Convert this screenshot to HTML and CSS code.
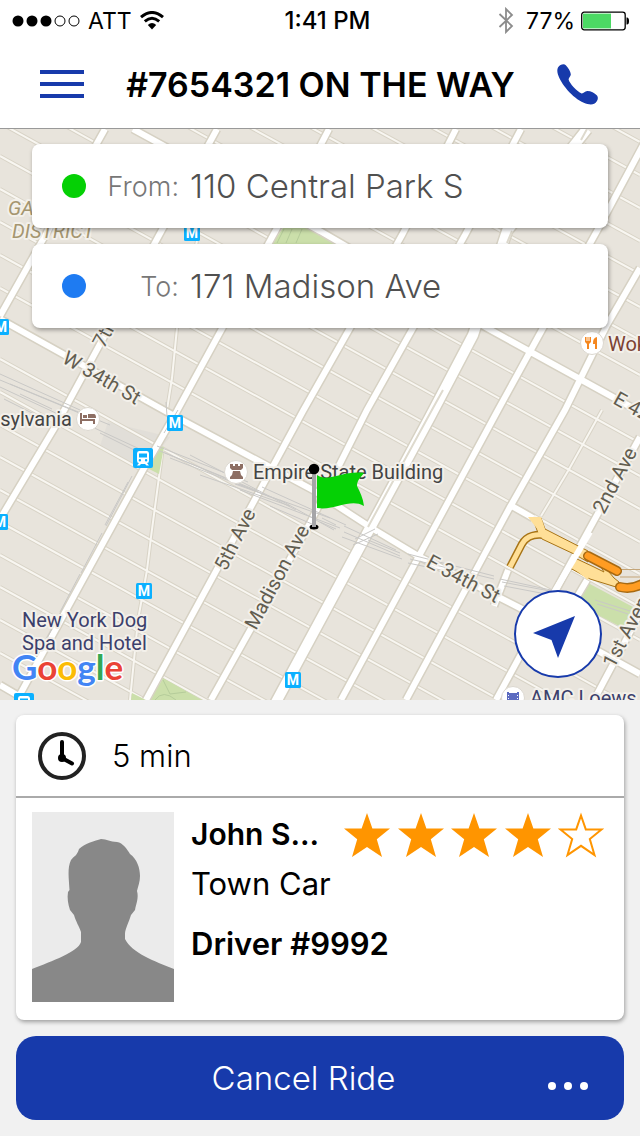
FILE: index.html
```
<!DOCTYPE html>
<html lang="en">
<head>
    <meta charset="UTF-8">
    <meta name="viewport" content="width=device-width, initial-scale=1.0">
    <title>Ride #7654321</title>
    <link rel="stylesheet" href="styles.css">
</head>
<body>
    <div class="status-bar">
        <div class="status-left">
            <svg class="signal" width="68" height="14" viewBox="0 0 68 14" aria-hidden="true">
                <circle cx="6" cy="7" r="5.5"/>
                <circle cx="20" cy="7" r="5.5"/>
                <circle cx="34" cy="7" r="5.5"/>
                <circle class="off" cx="48" cy="7" r="5"/>
                <circle class="off" cx="62" cy="7" r="5"/>
            </svg>
            <span>ATT</span>
            <svg width="24" height="19" viewBox="0 0 24 19" aria-hidden="true">
                <path d="M1 6.2 Q12 -3.2 23 6.2" fill="none" stroke="#000" stroke-width="3"/>
                <path d="M4.8 10.4 Q12 4.2 19.2 10.4" fill="none" stroke="#000" stroke-width="3"/>
                <path d="M7.8 13.9 Q12 10 16.2 13.9 L12 18.6 Z"/>
            </svg>
        </div>
        <div class="status-time">1:41 PM</div>
        <div class="status-right">
            <svg width="16" height="27" viewBox="0 0 16 27" aria-hidden="true">
                <path d="M1.5 7 L14 19 L8 25 V2 L14 8 L1.5 20" fill="none" stroke="#8c8c8c" stroke-width="1.8"/>
            </svg>
            <span>77%</span>
            <svg width="48" height="20" viewBox="0 0 48 20" aria-hidden="true">
                <rect x="0.7" y="1.2" width="43.500" height="17.6" rx="2.5" fill="#fff" stroke="#000" stroke-width="1.3"/>
                <rect x="2" y="2.6" width="28" height="14.8" fill="#4cd964"/>
                <path d="M45.500 6.5 H46 Q48 6.5 48 10 Q48 13.5 46 13.5 H45.500 Z"/>
            </svg>
        </div>
    </div>

    <header class="header">
        <button class="icon-button" aria-label="Menu">
            <svg width="44" height="28" viewBox="0 0 44 28"><path d="M0 0H44V4H0ZM0 12H44V16H0ZM0 24H44V28H0Z"/></svg>
        </button>
        <h1>#7654321 ON THE WAY</h1>
        <a class="icon-button" href="tel:" aria-label="Call driver">
            <svg width="41" height="41" viewBox="0 0 41 41"><path d="M1 3.5 C3 0.5 7 -0.6 8.8 1.2 C11.5 4 13.5 7.5 13.8 10.2 C14 12.4 11.6 13.2 11.6 15.6 C12.5 19.5 20 28 24.6 29.4 C26.8 29.6 27.6 27 30.3 27 C34 27 37.5 29 40 31.6 C42 34 40.2 38.4 37.2 39.8 C34.5 41 30.5 40.4 26.8 38.8 C15.5 34 3.5 19.5 0.8 10 C0.2 7.5 0 5.3 1 3.5 Z"/></svg>
        </a>
    </header>

    <main class="map">
        <svg class="map-canvas" viewBox="0 129 640 571" preserveAspectRatio="xMidYMin slice" role="img" aria-label="Map of Midtown Manhattan">
            <defs>
                <path id="streets" d="M0 -9 L640 340 M0 -42 L640 307 M0 -75 L640 274 M0 -108 L640 241 M0 -141 L640 208 M0 -174 L640 175 M0 -207 L640 142 M0 24 L640 375
                    M0 90 L640 443 M0 123 L640 476 M0 156 L640 509 M0 189 L640 542 M0 222 L640 574 M0 255 L640 607 M0 288 L640 640
                    M0 359 L640 711 M0 392 L640 744 M0 425 L640 777 M0 457 L640 809 M0 490 L640 842 M0 522 L640 874 M0 555 L640 907 M0 587 L640 939 M0 620 L640 972 M0 653 L640 1005 M0 686 L640 1038
                    M130 700 L138 620 L147 570 L151 537 L163 447 M166 416 L172 378 L177 328 L197 241 M602 410 L568 471 L541 516"/>
                <path id="avenues" d="M0 316 L105 129 M0 519 L55 427 L163 228 L217 129 M17 700 L143 470 L177 411 L277 228 L329 129 M146 700 L303 411 L350 328 L402 235 L456 129 M211 700 L310 523 L367 410 L413 328 L465 235 L521 129 M341 700 L498 410 L543 328 L597 231 L650 132 M406 700 L510 507 L565 410 L607 325 L640 268 M496 700 L563 577 L640 437 M594 700 L645 604 M508 570 L494 606 M587 580 L565 617
                    M0 319 L167 412 L313 490 L370 527 L420 557 L520 608 L640 674 M133 129 L320 231 L487 328 L640 412 M0 685 L24 699 M510 505 L533 518"/>
                <path id="park-ave" d="M275 704 L363 541 L430 417 L473 335 L507 231 L587 129"/>
                <symbol id="metro" viewBox="0 0 16 16">
                    <rect width="16" height="16" rx="1.5" fill="#0bb0ff"/>
                    <text class="metro-m" x="8" y="13" text-anchor="middle">M</text>
                </symbol>
                <symbol id="train" viewBox="0 0 20 20">
                    <rect width="20" height="20" rx="2" fill="#0bb0ff"/>
                    <path fill="#fff" fill-rule="evenodd" d="M6 3 H14 Q16 3 16 5.5 V12.5 Q16 15 14 15 L16 17.5 H13.5 L12 16 H8 L6.5 17.5 H4 L6 15 Q4 15 4 12.5 V5.5 Q4 3 6 3 Z M6 5.5 V9.5 H14 V5.5 Z M5.7 12.3 A1.2 1.2 0 1 0 8.1 12.3 A1.2 1.2 0 1 0 5.7 12.3 M11.9 12.3 A1.2 1.2 0 1 0 14.3 12.3 A1.2 1.2 0 1 0 11.9 12.3"/>
                </symbol>
            </defs>

            <rect class="land" x="0" y="129" width="640" height="571"/>
            <path fill="#dedbd5" d="M108 422 L170 437 L143 470 L100 446 Z" opacity="0.7"/>

            <use href="#streets" class="street-edge"/>
            <use href="#streets" class="street"/>

            <!-- parks -->
            <g class="park">
                <path d="M283 228 H315 L342 244 H272 Z"/>
                <path d="M157 446 L164 447 L159 474 L147 468 Z"/>
                <path d="M163 678 L202 700 H150 Z"/>
                <path d="M132 693 L146 700 H131 Z"/>
                <path d="M588 583 L633 607 L623 628 L577 604 Z"/>
            </g>
            <path class="park-path" d="M155 700 Q163 689 176 700 M163 680 L170 694 M186 692 L170 694 M277 243 L284 229 M286 243 L292 229 M296 243 L302 229"/>

            <use href="#avenues" class="avenue-edge"/>
            <use href="#park-ave" class="park-ave-edge"/>
            <use href="#avenues" class="avenue"/>
            <use href="#park-ave" class="park-ave"/>
            <path class="median" d="M368 527 L433 408 L443 390 M507 243 L512 231 M581 140 L587 129"/>

            <!-- rail tracks -->
            <path class="rail" d="M0 374 L80 410 M0 380 L96 420 M0 387 L60 415 M10 384 L110 425 M20 394 L52 409 M4 399 L40 417 M88 425 L146 452 M100 433 L150 458 M157 446 L248 482 M160 451 L258 491 M165 453 L270 497 M170 458 L284 502 M190 455 L296 510 M200 475 L290 506 M235 484 L330 518 M240 490 L340 528 M262 487 L346 525 M280 500 L334 530 M270 506 L312 524 M320 522 L336 529 M322 518 L336 525 M344 526 L396 550 M344 532 L400 556 M342 537 L402 559 M368 540 L400 553 M408 554 L494 576 M410 559 L494 579 M408 563 L460 574 M500 579 L560 592 M502 582 L550 591 M504 586 L546 594 M595 600 L630 611 M597 604 L628 614 M353 545 L378 534 M355 539 L375 529"/>
            <path class="rail" d="M132 476 L106 526 M128 482 L105 525 M102 533 L81 573 M80 574 L60 612 M52 629 L35 660 M164 433 L178 410 M167 416 L166 402"/>

            <!-- tunnel approach -->
            <path class="ramp-edge" d="M510 567 L522 544 C527 535 537 534 544 535 L580 552"/>
            <path class="ramp-fill outlined" d="M533 519 L541 518 L545 529 L588 551 L588 562 L574 554 L542 539 L538 533 Z"/>
            <path class="ramp" d="M510 567 L522 544 C527 535 537 534 544 535 L580 552"/>
            <path class="ramp-fill outlined" d="M577 559 L594 567 L604 572 L599 564 L604 566 L614 578 L619 582 L616 587 L590 579 L570 568 Z"/>
            <path class="ramp-fill" d="M528 517 L541 517 L545 529 L538 530 Z M568 564 L576 560 L590 572 L588 580 Z"/>
            <path class="avenue" d="M553 594 L590 532"/>
            <path class="tunnel-exit" d="M620 569.500 H640 M620 577 H640"/>
            <path class="road-edge" d="M588 556 L617 571 M620 587 Q632 590 644 583"/>
            <path class="road-main" d="M588 556 L617 571 M620 587 Q632 590 644 583"/>

            <g class="street-label">
                <text transform="translate(61 362) rotate(30)">W 34th St</text>
                <text transform="translate(104 349) rotate(-62)">7th Ave</text>
                <text transform="translate(226 572) rotate(-63)">5th Ave</text>
                <text transform="translate(256 631) rotate(-62)">Madison Ave</text>
                <text transform="translate(425 566) rotate(28)">E 34th St</text>
                <text transform="translate(604 515) rotate(-62)">2nd Ave</text>
                <text transform="translate(614 669) rotate(-62)">1st Avenue</text>
                <text transform="translate(612 403) rotate(29)">E 42nd St</text>
            </g>
            <g class="area-label">
                <text x="8" y="215">GARMENT</text>
                <text x="12" y="238">DISTRICT</text>
            </g>
            <g class="place-label">
                <text x="72" y="426" text-anchor="end">sylvania</text>
                <text x="253" y="479">Empire State Building</text>
            </g>
            <g class="place-label venue">
                <text x="22" y="627">New York Dog</text>
                <text x="22" y="650">Spa and Hotel</text>
                <text x="530" y="705">AMC Loews</text>
            </g>
            <text class="place-label food" x="608" y="351">Wok</text>

            <g class="poi">
                <circle cx="88" cy="419" r="11.5"/>
                <circle cx="236" cy="472" r="11.5"/>
                <circle cx="592" cy="343" r="11.5"/>
                <circle cx="513" cy="698" r="11.5"/>
            </g>
            <path fill="#8d6e63" d="M80 413 H82 V419 H95 V424 H93 V421 H82 V424 H80 Z M83 415 H87 V418 H83 Z M88 414 H94 Q96 414 96 418 H88 Z"/>
            <path fill="#8d6e63" d="M230 464 H233 V466 H235 V464 H238 V466 H240 V464 H243 V468 L241 470 H232 L230 468 Z M233 471 H240 L241 475 H232 Z M232 475 H241 L243 477 V479 H230 V477 Z"/>
            <path fill="#f5871f" d="M585 337 H586.5 V341 H587.5 V337 H588.5 V341 H589.5 V337 H591 V342 L589 344 V349 H587 V344 L585 342 Z M597 337 V349 H595 V344 H593 Q592.500 338 597 337 Z"/>
            <path fill="#5c6bc0" fill-rule="evenodd" d="M507 692 H509 V693 H517 V692 H519 V703 H507 Z M508 695 V696 H509 V695 Z M508 698 V699 H509 V698 Z M517 695 V696 H518 V695 Z M517 698 V699 H518 V698 Z"/>

            <use href="#metro" x="184" y="225" width="16" height="16"/>
            <use href="#metro" x="-7" y="319" width="16" height="16"/>
            <use href="#metro" x="167" y="415" width="16" height="16"/>
            <use href="#metro" x="-8" y="514" width="16" height="16"/>
            <use href="#metro" x="136" y="583" width="16" height="16"/>
            <use href="#metro" x="285" y="672" width="16" height="16"/>
            <use href="#train" x="133" y="448" width="20" height="20"/>
            <use href="#train" x="14" y="693" width="20" height="20"/>

            <text class="google" x="12" y="680"><tspan fill="#4285f4">G</tspan><tspan fill="#ea4335">o</tspan><tspan fill="#fbbc05">o</tspan><tspan fill="#4285f4">g</tspan><tspan fill="#34a853">l</tspan><tspan fill="#ea4335">e</tspan></text>

            <!-- pickup flag -->
            <ellipse cx="314" cy="527" rx="4.500" ry="2.500"/>
            <rect x="312" y="470" width="4" height="57" fill="#a5a5a8"/>
            <path fill="#05d005" d="M317 475 C328 483 344 470 364 473 C361 477 357 480 357 486 C360 492 363 498 364 506 C350 498 335 511 317 508 Z"/>
            <circle cx="314" cy="469" r="5.300"/>
        </svg>

        <form class="route">
            <div class="route-row">
                <span class="dot dot-from"></span>
                <label for="from">From:</label>
                <input id="from" type="text" value="110 Central Park S" readonly>
            </div>
            <div class="route-row">
                <span class="dot dot-to"></span>
                <label for="to">To:</label>
                <input id="to" type="text" value="171 Madison Ave" readonly>
            </div>
        </form>

        <button class="locate" aria-label="Center on my location">
            <svg width="42" height="42" viewBox="0 0 42 42"><path d="M42 0 L25 42 L18.500 24 L0 17 Z"/></svg>
        </button>
    </main>

    <section class="ride">
        <div class="card">
            <div class="eta">
                <svg width="48" height="48" viewBox="0 0 48 48" aria-hidden="true">
                    <circle cx="24" cy="24" r="22" fill="none" stroke="#222" stroke-width="4"/>
                    <path d="M24 10 V26 L34 31.500" fill="none" stroke="#000" stroke-width="4" stroke-linecap="round"/>
                    <circle cx="24" cy="26" r="4"/>
                </svg>
                <span>5 min</span>
            </div>
            <div class="driver">
                <svg class="photo" width="142" height="190" viewBox="0 0 142 190" role="img" aria-label="Driver photo">
                    <rect width="142" height="190" fill="#ebebeb"/>
                    <path fill="#888" d="M0 157 C20 149 46 140 49 130 V120 C47 114 44 110 42 103 L38 98 C36 92 35 86 36 80 L37.500 78 C37 67 35 56 39 48 C42 44 45 44 47 37 C53 31 63 29 69 27 C75 27 78 30 85 30 C91 31 95 37 98 42 C105 47 108 56 108 64 C108 70 106 74 105 79 C107 86 104 92 103 98 L99 103 C97 110 93 117 93 122 V127 C100 141 122 149 142 157 V190 H0 Z"/>
                </svg>
                <div class="driver-info">
                    <div class="name-row">
                        <h2>John S...</h2>
                        <div class="stars" role="img" aria-label="4 out of 5 stars">
                            <svg viewBox="0 0 46 44"><path d="M23 0 L28.400 15.500 H46 L32.800 26.300 L38 44 L23 34 L8 44 L13.200 26.300 L0 15.500 H17.600 Z"/></svg>
                            <svg viewBox="0 0 46 44"><path d="M23 0 L28.400 15.500 H46 L32.800 26.300 L38 44 L23 34 L8 44 L13.200 26.300 L0 15.500 H17.600 Z"/></svg>
                            <svg viewBox="0 0 46 44"><path d="M23 0 L28.400 15.500 H46 L32.800 26.300 L38 44 L23 34 L8 44 L13.200 26.300 L0 15.500 H17.600 Z"/></svg>
                            <svg viewBox="0 0 46 44"><path d="M23 0 L28.400 15.500 H46 L32.800 26.300 L38 44 L23 34 L8 44 L13.200 26.300 L0 15.500 H17.600 Z"/></svg>
                            <svg viewBox="0 0 46 44"><path class="empty" d="M23 2.500 L27.800 16.400 H43.500 L31.800 26 L36.500 42 L23 32.800 L9.500 42 L14.200 26 L2.500 16.400 H18.200 Z"/></svg>
                        </div>
                    </div>
                    <p>Town Car</p>
                    <p class="driver-id">Driver #9992</p>
                </div>
            </div>
        </div>
        <button class="cancel">
            <span class="cancel-text">Cancel Ride</span>
            <svg width="42" height="8" viewBox="0 0 42 8" aria-hidden="true"><circle cx="5" cy="4" r="4"/><circle cx="21" cy="4" r="4"/><circle cx="37" cy="4" r="4"/></svg>
        </button>
    </section>
</body>
</html>
```
FILE: styles.css
```
* {
    box-sizing: border-box;
}
body {
    font-family: Inter, "Liberation Sans", sans-serif;
    margin: 0;
    min-height: 100vh;
    display: flex;
    flex-direction: column;
    background-color: #f1f1f1;
    color: #000;
}
button {
    font-family: inherit;
    border: none;
    cursor: pointer;
}
h1, h2, p {
    margin: 0;
}
svg {
    flex: none;
    display: block;
}

/* Status bar */
.status-bar {
    display: grid;
    grid-template-columns: 1fr auto 1fr;
    align-items: center;
    height: 40px;
    padding: 1px 11px 0 12px;
    background-color: #fff;
    font-size: 23px;
}
.status-left, .status-right {
    display: flex;
    align-items: center;
    gap: 8px;
}
.status-right {
    justify-content: flex-end;
    gap: 6px;
}
.status-right span {
    margin-left: 6px;
}
.status-time {
    padding-left: 14px;
    font-size: 24px;
    font-weight: 500;
}
.signal .off {
    fill: #fff;
    stroke: #000;
}

/* Header */
.header {
    display: flex;
    align-items: center;
    justify-content: space-between;
    height: 89px;
    padding: 0 42px 0 40px;
    background-color: #fff;
    border-bottom: 1px solid #999;
}
.header h1 {
    font-size: 34px;
    font-weight: 600;
    white-space: nowrap;
}
.icon-button {
    padding: 0;
    background: none;
    fill: #173aab;
}

/* Map */
.map {
    position: relative;
    flex: 1;
    min-height: 420px;
    overflow: hidden;
}
.map-canvas {
    position: absolute;
    inset: 0;
    width: 100%;
    height: 100%;
    font-family: Roboto, sans-serif;
}
.land {
    fill: #e8e4dc;
}
.street-edge, .street, .avenue-edge, .avenue, .park-ave-edge, .park-ave, .median, .rail {
    fill: none;
}
.street-edge {
    stroke: #d8d3c6;
    stroke-width: 4;
}
.street {
    stroke: #f8f6f1;
    stroke-width: 2;
}
.avenue-edge {
    stroke: #d6d1c3;
    stroke-width: 9;
}
.avenue {
    stroke: #fff;
    stroke-width: 6;
}
.park-ave-edge {
    stroke: #d6d1c3;
    stroke-width: 13;
}
.park-ave {
    stroke: #fff;
    stroke-width: 10;
}
.median {
    stroke: #dedace;
    stroke-width: 2;
}
.rail {
    stroke: #c9c8c6;
    stroke-width: 1;
}
.park {
    fill: #cbdfaa;
}
.park-path {
    fill: none;
    stroke: #b5cc9a;
}
.ramp-edge, .ramp, .road-edge, .road-main, .tunnel-exit {
    fill: none;
}
.ramp-edge {
    stroke: #a87416;
    stroke-width: 8;
}
.ramp {
    stroke: #ffdf97;
    stroke-width: 5;
}
.ramp-fill {
    fill: #ffdf97;
}
.outlined {
    stroke: #a87416;
}
.tunnel-exit {
    stroke: #c4a578;
}
.road-edge {
    stroke: #a86a12;
    stroke-width: 10;
    stroke-linecap: round;
}
.road-main {
    stroke: #ff9c22;
    stroke-width: 7;
    stroke-linecap: round;
}
.street-label, .place-label, .area-label, .google {
    font-size: 20px;
    paint-order: stroke;
    stroke: #f3f0ea;
    stroke-width: 4;
    stroke-linejoin: round;
}
.street-label {
    fill: #625d50;
}
.place-label {
    fill: #444;
}
.place-label.venue {
    fill: #3c406c;
}
.place-label.food {
    fill: #7c4334;
}
.area-label {
    fill: #a59670;
    font-style: italic;
}
.poi {
    fill: #fff;
    stroke: #dcd8d0;
}
.metro-m {
    fill: #fff;
    font-size: 14px;
    font-weight: 700;
}
.google {
    font-family: Lato, sans-serif;
    font-size: 35px;
    font-weight: 700;
    stroke: #fff;
    stroke-width: 3;
}

/* Pickup and drop-off */
.route {
    position: relative;
    display: flex;
    flex-direction: column;
    gap: 16px;
    padding: 15px 32px;
}
.route-row {
    display: flex;
    align-items: center;
    height: 84px;
    padding: 0 30px;
    background-color: #fff;
    border-radius: 8px;
    box-shadow: 1px 2px 4px rgba(0,0,0,0.35);
}
.dot {
    flex: none;
    width: 24px;
    height: 24px;
    border-radius: 50%;
}
.dot-from {
    background-color: #05d005;
}
.dot-to {
    background-color: #1e7bf2;
}
.route-row label {
    flex: none;
    width: 93px;
    text-align: right;
    font-size: 27px;
    font-weight: 300;
    color: #777;
}
.route-row input {
    flex: 1;
    min-width: 0;
    margin-left: 11px;
    padding: 0;
    border: none;
    outline: none;
    background: none;
    font-family: inherit;
    font-size: 33px;
    font-weight: 350;
    color: #505050;
}
.locate {
    position: absolute;
    right: 38px;
    bottom: 22px;
    display: flex;
    align-items: center;
    justify-content: center;
    width: 88px;
    height: 88px;
    padding: 6px 8px 0 0;
    border: 2px solid #173aab;
    border-radius: 50%;
    background-color: #fff;
    fill: #173aab;
}

/* Ride details */
.ride {
    display: flex;
    flex-direction: column;
    gap: 16px;
    padding: 15px 16px 16px;
}
.card {
    background-color: #fff;
    border-radius: 8px;
    box-shadow: 1px 2px 4px rgba(0,0,0,0.35);
    font-size: 31px;
}
.eta {
    display: flex;
    align-items: center;
    gap: 26px;
    height: 83px;
    padding: 0 22px;
    border-bottom: 2px solid #aaa;
    font-weight: 350;
}
.driver {
    display: flex;
    gap: 17px;
    padding: 14px 20px 18px 16px;
}
.driver-info {
    flex: 1;
    min-width: 0;
    line-height: 44px;
}
.name-row {
    display: flex;
    justify-content: space-between;
    margin-bottom: 4px;
}
.name-row h2 {
    font-size: 30px;
    font-weight: 600;
}
.stars {
    display: flex;
    justify-content: space-between;
    width: 260px;
    fill: #ff9500;
}
.stars svg {
    width: 46px;
    height: 46px;
}
.stars .empty {
    fill: none;
    stroke: #ff9500;
    stroke-width: 2;
}
.driver-id {
    margin-top: 16px;
    font-weight: 600;
}
.cancel {
    display: flex;
    align-items: center;
    height: 84px;
    padding: 0 35px 0 44px;
    border-radius: 20px;
    background-color: #173aab;
    color: #fff;
    fill: #fff;
    font-size: 33px;
    font-weight: 300;
}
.cancel-text {
    flex: 1;
}
.cancel svg {
    margin-top: 16px;
}
```
